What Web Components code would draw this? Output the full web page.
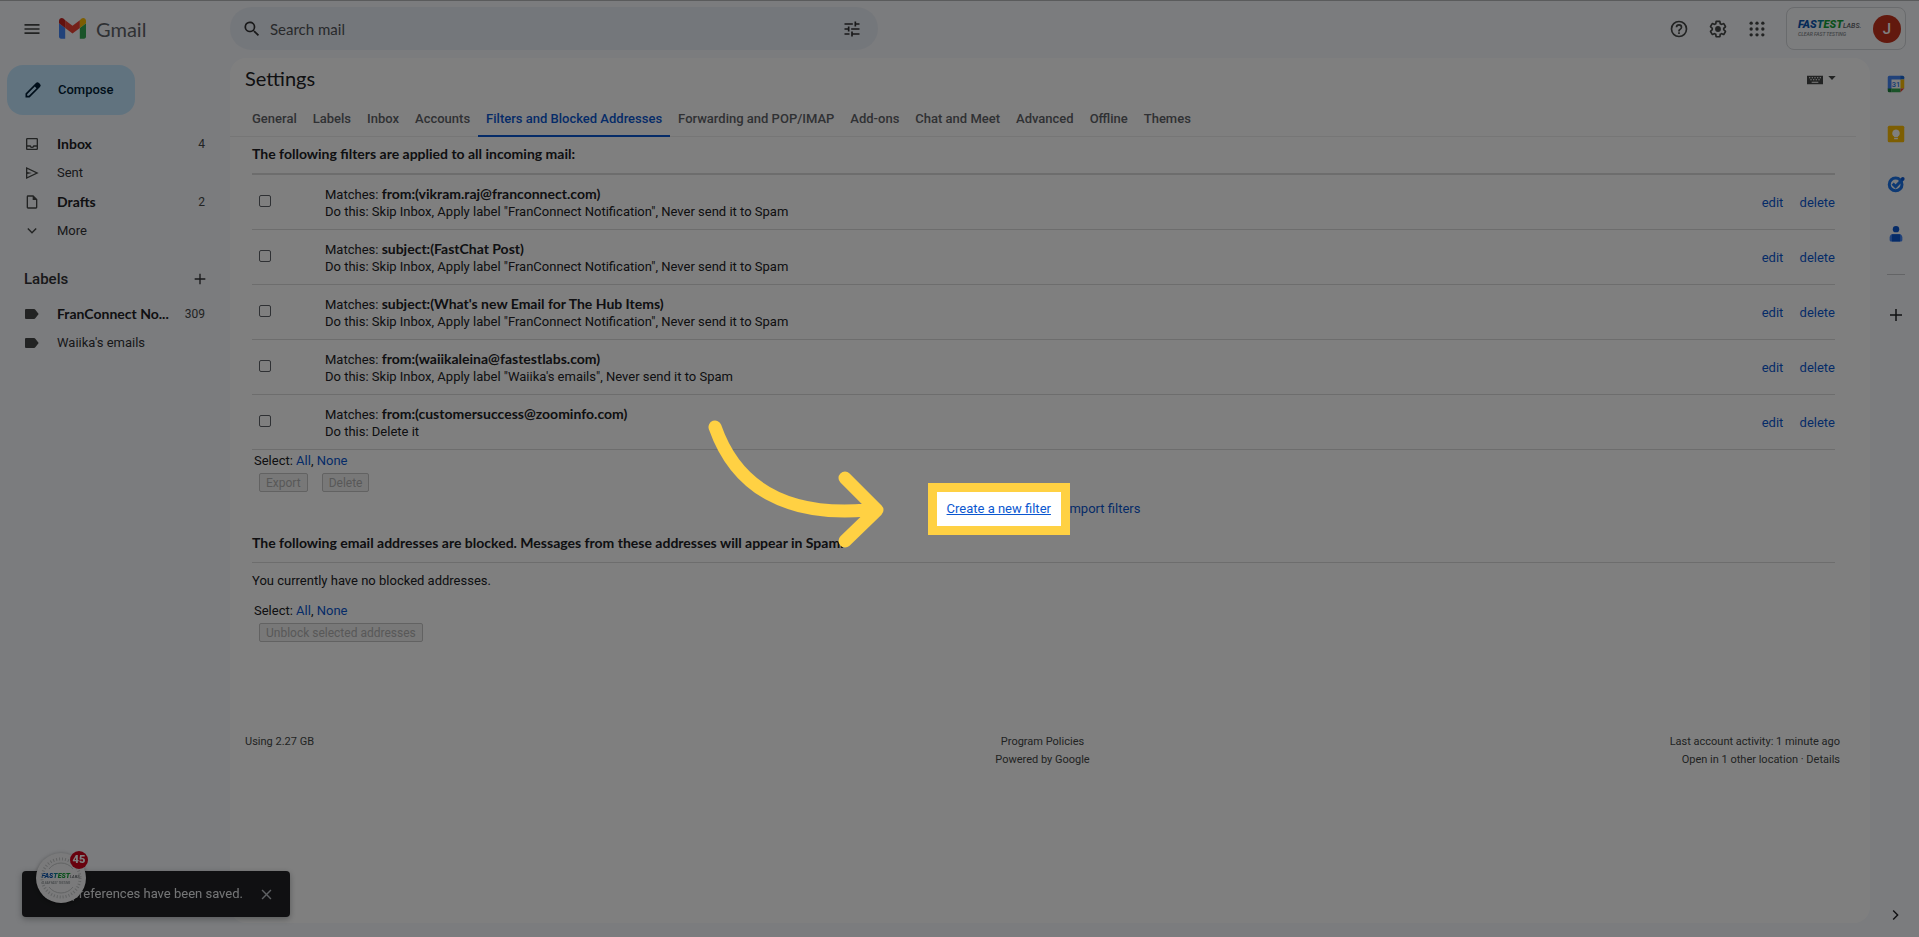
<!DOCTYPE html>
<html lang="en">
<head>
<meta charset="utf-8">
<meta name="viewport" content="width=device-width, initial-scale=1">
<title>Gmail - Settings</title>
<style>
  html, body { margin: 0; }
  body {
    background: #f6f8fc;
    color: #202124;
    font: 13px/18px Roboto, "Liberation Sans", sans-serif;
    --head-font: Lato, Roboto, sans-serif;
    --link: #0b57d0;
    --rule: #dadada;
  }
</style>
</head>
<body>
<gm-app></gm-app>

<script>
const define = (name, html, setup) => {
  const template = document.createElement('template');
  template.innerHTML = html;
  customElements.define(name, class extends HTMLElement {
    connectedCallback() {
      if (this.shadowRoot) return;
      const root = this.attachShadow({ mode: 'open' });
      root.append(template.content.cloneNode(true));
      if (setup) setup(this, root);
    }
  });
};

/* ---------- icons ---------- */
const ICONS = {
  menu: '<path d="M3 6h18v2H3zM3 11h18v2H3zM3 16h18v2H3z"/>',
  search: '<path d="M15.5 14h-.8l-.3-.3a6.5 6.5 0 1 0-.7.7l.3.3v.8l5 5 1.5-1.5zm-6 0a4.5 4.5 0 1 1 0-9 4.5 4.5 0 0 1 0 9z"/>',
  tune: '<path d="M3 17v2h6v-2zM3 5v2h10V5zm10 16v-2h8v-2h-8v-2h-2v6zM7 9v2H3v2h4v2h2V9zm14 4v-2H11v2zm-6-4h2V7h4V5h-4V3h-2z"/>',
  help: '<path d="M11 18h2v-2h-2zm1-16a10 10 0 1 0 0 20 10 10 0 0 0 0-20zm0 18a8 8 0 1 1 0-16 8 8 0 0 1 0 16zm0-14a4 4 0 0 0-4 4h2a2 2 0 1 1 4 0c0 2-3 1.75-3 5h2c0-2.25 3-2.5 3-5a4 4 0 0 0-4-4z"/>',
  gear: '<path d="M13.85 22.25h-3.7c-.74 0-1.36-.54-1.45-1.27l-.27-1.89c-.27-.14-.53-.29-.79-.46l-1.8.72c-.7.26-1.47-.03-1.81-.65L2.2 15.53c-.35-.66-.2-1.44.36-1.88l1.53-1.19c-.01-.15-.02-.3-.02-.46 0-.15.01-.31.02-.46l-1.52-1.19c-.59-.45-.74-1.26-.37-1.88l1.85-3.19c.34-.62 1.11-.9 1.79-.63l1.81.73c.26-.17.52-.32.78-.46l.27-1.91c.09-.7.71-1.25 1.44-1.25h3.7c.74 0 1.36.54 1.45 1.27l.27 1.89c.27.14.53.29.79.46l1.8-.72c.71-.26 1.48.03 1.82.65l1.84 3.18c.36.66.2 1.44-.36 1.88l-1.52 1.19c.01.15.02.3.02.46s-.01.31-.02.46l1.52 1.19c.56.45.72 1.23.37 1.86l-1.86 3.22c-.34.62-1.11.9-1.8.63l-1.8-.72c-.26.17-.52.32-.78.46l-.27 1.91c-.1.68-.72 1.22-1.46 1.22zm-3.23-2h2.76l.37-2.55.53-.22c.44-.18.88-.44 1.34-.78l.45-.34 2.38.96 1.38-2.4-2.03-1.58.07-.56c.03-.26.06-.51.06-.78s-.03-.53-.06-.78l-.07-.56 2.03-1.58-1.39-2.4-2.39.96-.45-.35c-.42-.32-.87-.58-1.33-.77l-.52-.22-.37-2.55h-2.76l-.37 2.55-.53.21c-.44.19-.88.44-1.34.79l-.45.33-2.38-.95-1.39 2.39 2.03 1.58-.07.56a7 7 0 0 0-.06.79c0 .26.02.53.06.78l.07.56-2.03 1.58 1.38 2.4 2.39-.96.45.35c.43.33.86.58 1.33.77l.53.22z"/><circle cx="12" cy="12" r="3.5"/>',
  apps: '<circle cx="5" cy="5" r="2"/><circle cx="12" cy="5" r="2"/><circle cx="19" cy="5" r="2"/><circle cx="5" cy="12" r="2"/><circle cx="12" cy="12" r="2"/><circle cx="19" cy="12" r="2"/><circle cx="5" cy="19" r="2"/><circle cx="12" cy="19" r="2"/><circle cx="19" cy="19" r="2"/>',
  pencil: '<path fill-rule="evenodd" d="M20.4 4.8l-1.2-1.2a2.6 2.6 0 0 0-3.7 0L3 16.1V21h4.9L20.4 8.5a2.6 2.6 0 0 0 0-3.7zM7 19H5v-2L14.2 7.8l2 2z"/>',
  inbox: '<path d="M19 3H5a2 2 0 0 0-2 2v14c0 1.1.9 2 2 2h14a2 2 0 0 0 2-2V5a2 2 0 0 0-2-2zm0 16H5v-3h3.6a4 4 0 0 0 6.8 0H19zm0-5h-5a2 2 0 0 1-4 0H5V5h14z"/>',
  sent: '<path d="M3 3v18l19-9zm2 3l12.6 6L5 18v-4.5l7-1.5-7-1.5z"/>',
  draft: '<path d="M14 2H6a2 2 0 0 0-2 2v16c0 1.1.9 2 2 2h12a2 2 0 0 0 2-2V8zM6 20V4h7v5h5v11z"/>',
  down: '<path d="M12 16l-7-7 1.5-1.5L12 13l5.5-5.5L19 9z"/>',
  next: '<path d="M8.5 4.5L7 6l6 6-6 6 1.5 1.5L16 12z"/>',
  plus: '<path d="M20 13h-7v7h-2v-7H4v-2h7V4h2v7h7z"/>',
  label: '<path d="M3 4.500h12c1 0 1.500.300 2 1l5 6.500-5 6.500c-.5.700-1 1-2 1H3A1.500 1.500 0 0 1 1.500 18V6A1.500 1.500 0 0 1 3 4.500z"/>',
  close: '<path d="M19 6.4L17.6 5 12 10.6 6.4 5 5 6.4l5.6 5.6L5 17.6 6.4 19l5.6-5.6 5.6 5.6 1.4-1.4-5.6-5.6z"/>',
  keyboard: '<path fill-rule="evenodd" d="M0 5.5h24v13H0zM3 8v1.500h2V8zm4 0v1.500h2V8zm4 0v1.500h2V8zm4 0v1.500h2V8zm4 0v1.500h2V8zM5 11v1.500h2V11zm4 0v1.500h2V11zm4 0v1.500h2V11zm4 0v1.500h2V11zM7 14.500v1.500h10v-1.500z"/>',
  caret: '<path d="M1 6h22L12 18z"/>',
  mail: '<path fill="#4285f4" d="M1.6 21H5.5V11.5L0 7.4v12A1.6 1.6 0 0 0 1.6 21z"/><path fill="#34a853" d="M18.5 21h3.9a1.6 1.6 0 0 0 1.6-1.6v-12l-5.5 4.1z"/><path fill="#fbbc04" d="M18.5 4.6v6.9L24 7.4V5.2c0-2-2.3-3.2-3.9-2z"/><path fill="#ea4335" d="M5.5 11.5V4.6l6.5 4.9 6.5-4.9v6.9L12 16.4z"/><path fill="#c5221f" d="M0 5.2v2.2l5.5 4.1V4.6L3.9 3.2C2.3 2 0 3.2 0 5.2z"/>',
  calendar: '<path fill="#fff" d="M5 5h14v14H5z"/><path fill="#4285f4" d="M3 1h16v5H6v13H1V3a2 2 0 0 1 2-2z"/><path fill="#1967d2" d="M18 1h3a2 2 0 0 1 2 2v3h-5z"/><path fill="#fbbc04" d="M18 6h5v12h-5z"/><path fill="#34a853" d="M6 18h12v5H6z"/><path fill="#188038" d="M1 18h5v5H3a2 2 0 0 1-2-2z"/><path fill="#ea4335" d="M18 18h5l-5 5z"/><text x="12" y="16" text-anchor="middle" font-family="Roboto" font-size="10" font-weight="500" fill="#1a73e8">31</text>',
  keep: '<rect x="1" y="1" width="22" height="22" rx="2" fill="#fbbc04"/><path fill="#fff" d="M12 6a5 5 0 0 0-2.5 9.3V16h5v-.7A5 5 0 0 0 12 6zM9.5 17h5v2h-5z"/>',
  tasks: '<circle cx="11.5" cy="12.5" r="8.5" fill="none" stroke="#1a73e8" stroke-width="4"/><path fill="none" stroke="#1a73e8" stroke-width="4" d="M7.5 11.5l4 4L21.5 5"/><circle cx="21" cy="5" r="2.5" fill="#0b57d0"/>',
  contacts: '<circle cx="12" cy="5.5" r="4.3" fill="#0b57d0"/><path fill="#4285f4" d="M3.5 16.5A5 5 0 0 1 8 12h8a5 5 0 0 1 4.5 4.5V20a2 2 0 0 1-2 2h-13a2 2 0 0 1-2-2z"/><path fill="#0b57d0" d="M6.5 12.5h11V22h-11z"/>'
};
define('gm-icon', `
  <style>
    :host { display: inline-block; width: var(--size, 18px); height: var(--size, 18px); flex: none; }
    svg { display: block; width: 100%; height: 100%; fill: currentColor; }
  </style>
  <svg viewBox="0 0 24 24" aria-hidden="true"></svg>`,
  (el, root) => { root.querySelector('svg').innerHTML = ICONS[el.getAttribute('name')] || ''; });

/* ---------- company wordmark ---------- */
define('gm-wordmark', `
  <style>
    :host { display: block; font: italic 900 11px/10px Roboto, sans-serif; white-space: nowrap; text-align: left; }
    .row { display: flex; align-items: baseline; }
    .a { color: #0a55b0; } .b { color: #0b7f96; } .c { color: #16a038; }
    small { font: italic 500 7px/10px Roboto, sans-serif; color: #5f6368; }
    .tag { font: italic 500 5px/6px Roboto, sans-serif; color: #80868b; }
    :host([compact]) { font-size: 7px; line-height: 8px; }
    :host([compact]) small { font-size: 4px; line-height: 8px; }
    :host([compact]) .tag { font-size: 3px; line-height: 4px; }
  </style>
  <div class="row"><span class="a">FAS</span><span class="b">T</span><span class="c">EST</span><small>LABS.</small></div>
  <div class="tag">CLEAR FAST TESTING</div>`);

/* ---------- top bar ---------- */
define('gm-topbar', `
  <style>
    :host { display: flex; align-items: center; height: 55px; padding-bottom: 2px; border-top: 1px solid #b4b6b8; color: #444746; }
    button { border: 0; padding: 0; background: none; color: inherit; display: flex; }
    .brand { width: 230px; flex: none; display: flex; align-items: center; box-sizing: border-box; padding-left: 22px; }
    .brand gm-icon { --size: 20px; }
    .brand .logo { --size: 27px; margin-left: 17px; }
    .brand a { display: flex; align-items: center; color: #5f6368; text-decoration: none; font: 20px/28px var(--head-font); }
    .brand span { margin-left: 10px; }
    form { display: flex; align-items: center; width: 648px; height: 43px; box-sizing: border-box; padding: 0 16px 0 12px; border-radius: 22px; background: #e9eef6; color: #303133; }
    form gm-icon { --size: 20px; }
    input { flex: 1; min-width: 0; border: 0; outline: 0; background: none; padding: 0; margin-left: 8px; font: 15px/20px var(--head-font); color: #444746; }
    input::placeholder { color: #505356; opacity: 1; }
    nav { margin-left: auto; display: flex; align-items: center; gap: 19px; padding-right: 13px; }
    nav gm-icon { --size: 20px; }
    .account { display: flex; align-items: center; justify-content: space-between; width: 120px; height: 43px; box-sizing: border-box; border: 1px solid #d3d6da; border-radius: 8px; padding: 0 4px 0 11px; background: #f9fafc; }
    .avatar { width: 28px; height: 28px; border-radius: 50%; background: #c5321c; color: #fff; font: 500 15px/28px Roboto, sans-serif; text-align: center; }
  </style>
  <div class="brand">
    <button aria-label="Main menu"><gm-icon name="menu"></gm-icon></button>
    <a href="#inbox"><gm-icon class="logo" name="mail"></gm-icon><span>Gmail</span></a>
  </div>
  <form>
    <button type="button" aria-label="Search"><gm-icon name="search"></gm-icon></button>
    <input type="text" aria-label="Search mail" placeholder="Search mail">
    <button type="button" aria-label="Search options"><gm-icon name="tune"></gm-icon></button>
  </form>
  <nav>
    <button aria-label="Support"><gm-icon name="help"></gm-icon></button>
    <button aria-label="Settings"><gm-icon name="gear"></gm-icon></button>
    <button aria-label="Google apps"><gm-icon name="apps"></gm-icon></button>
    <button class="account" aria-label="Account"><gm-wordmark></gm-wordmark><span class="avatar">J</span></button>
  </nav>`);

/* ---------- left navigation ---------- */
define('gm-nav-item', `
  <style>
    :host { display: block; height: 29px; }
    a { display: flex; align-items: center; height: 100%; padding: 0 25px 0 24px; color: #303134; text-decoration: none; }
    gm-icon { --size: 16px; color: #444746; margin-right: 17px; }
    span { flex: 1; white-space: nowrap; }
    em { font: 12px/18px Roboto, sans-serif; color: #444746; }
    :host([unread]) span { font: 700 14px/18px var(--head-font); color: #202124; }
  </style>
  <a href="#"><span><slot></slot></span><em></em></a>`,
  (el, root) => {
    const icon = document.createElement('gm-icon');
    icon.setAttribute('name', el.getAttribute('icon'));
    root.querySelector('a').prepend(icon);
    root.querySelector('em').textContent = el.getAttribute('count') || '';
  });

define('gm-sidebar', `
  <style>
    :host { display: block; width: 230px; flex: none; }
    .compose { display: flex; align-items: center; width: 128px; height: 50px; margin: 7px 0 14px 7px; padding: 0 0 0 16px; border: 0; border-radius: 16px; background: #c2e7ff; color: #001d35; font: 500 13px/18px Roboto, sans-serif; }
    .compose gm-icon { --size: 20px; margin-right: 15px; }
    h2 { display: flex; align-items: center; justify-content: space-between; margin: 24px 22px 10px 24px; height: 20px; font: 500 15px/20px Roboto, sans-serif; color: #303134; }
    h2 button { display: flex; padding: 0; border: 0; background: none; color: #303134; --size: 16px; }
  </style>
  <button class="compose"><gm-icon name="pencil"></gm-icon>Compose</button>
  <nav>
    <gm-nav-item icon="inbox" unread count="4">Inbox</gm-nav-item>
    <gm-nav-item icon="sent">Sent</gm-nav-item>
    <gm-nav-item icon="draft" unread count="2">Drafts</gm-nav-item>
    <gm-nav-item icon="down">More</gm-nav-item>
  </nav>
  <h2>Labels<button aria-label="Create new label"><gm-icon name="plus"></gm-icon></button></h2>
  <nav>
    <gm-nav-item icon="label" unread count="309">FranConnect No...</gm-nav-item>
    <gm-nav-item icon="label">Waiika's emails</gm-nav-item>
  </nav>`);

/* ---------- settings tabs ---------- */
define('gm-tabs', `
  <style>
    :host { display: flex; padding-left: 14px; margin-right: 14px; border-bottom: 1px solid #ececec; }
    a { padding: 9px 8px 7px; border-bottom: 2px solid transparent; margin-bottom: -1px; color: #5f6368; font-weight: 500; text-decoration: none; white-space: nowrap; }
    a[aria-current] { color: #0b57d0; border-color: #0b57d0; }
  </style>`,
  (el, root) => {
    el.getAttribute('items').split('|').forEach(name => {
      const a = document.createElement('a');
      a.href = '#settings';
      a.textContent = name;
      if (name === el.getAttribute('current')) a.setAttribute('aria-current', 'page');
      root.append(a);
    });
  });

/* ---------- filter list ---------- */
const SKIP = label => `Skip Inbox, Apply label "${label}", Never send it to Spam`;
const FILTERS = [
  ['from:(vikram.raj@franconnect.com)', SKIP('FranConnect Notification')],
  ['subject:(FastChat Post)', SKIP('FranConnect Notification')],
  ["subject:(What's new Email for The Hub Items)", SKIP('FranConnect Notification')],
  ['from:(waiikaleina@fastestlabs.com)', SKIP("Waiika's emails")],
  ['from:(customersuccess@zoominfo.com)', 'Delete it']
];
define('gm-filter-list', `
  <style>
    :host { display: block; border-top: 2px solid var(--rule); }
    table { width: 100%; border-collapse: collapse; }
    td { height: 53px; padding: 1px 0 0; border-bottom: 1px solid var(--rule); }
    .pick { width: 73px; }
    input { display: block; appearance: none; width: 12px; height: 12px; margin: 0 0 4px 7px; border: 1px solid #5f6368; border-radius: 2px; }
    b { font: 700 14px/18px var(--head-font); }
    .line { display: block; height: 18px; }
    .act { text-align: right; white-space: nowrap; }
    .act a { color: var(--link); text-decoration: none; margin-left: 13px; }
  </style>
  <table><tbody></tbody></table>`,
  (el, root) => {
    root.querySelector('tbody').innerHTML = FILTERS.map(([match, action], i) => `
      <tr>
        <td class="pick"><input type="checkbox" id="f${i}"></td>
        <td><label for="f${i}"><span class="line">Matches: <b>${match}</b></span><span class="line">Do this: ${action}</span></label></td>
        <td class="act"><a href="#edit">edit</a> <a href="#delete">delete</a></td>
      </tr>`).join('');
  });

/* ---------- select all / none with its buttons ---------- */
define('gm-bulk', `
  <style>
    :host { display: block; padding-left: 2px; }
    a { color: var(--link); text-decoration: none; }
    .buttons { display: flex; gap: 14px; padding: 3px 0 0 5px; }
    ::slotted(button) { height: 19px; padding: 0 6px; border: 1px solid #c4c4c4; border-radius: 2px; background: #f0f0f0; color: #b0b0b0; font: 12px/16px Roboto, sans-serif; }
  </style>
  <div>Select: <a href="#all">All</a>, <a href="#none">None</a></div>
  <div class="buttons"><slot></slot></div>`);

define('gm-spotlight', `
  <style>
    :host { display: inline-block; position: relative; }
    .frame { position: absolute; z-index: 50; inset: -17px -19px; border: 9px solid #ffd143; box-shadow: 0 0 0 4000px rgba(0, 0, 0, .5); pointer-events: none; }
    svg { position: absolute; z-index: 51; right: calc(100% + 62px); top: -82px; width: 180px; height: 134px; fill: none; stroke: #ffd143; stroke-width: 13; stroke-linecap: round; stroke-linejoin: round; pointer-events: none; }
  </style>
  <slot></slot>
  <div class="frame"></div>
  <svg viewBox="0 0 180 134" aria-hidden="true"><path d="M10 9C31 69 81 99 162 92M140 60L172 92L140 123"/></svg>`);

/* ---------- settings panel ---------- */
define('gm-settings', `
  <style>
    :host { display: flex; flex-direction: column; flex: 1; min-width: 0; margin-bottom: 14px; border-radius: 16px; background: #fff; }
    header { display: flex; align-items: center; justify-content: space-between; padding: 6px 34px 9px 15px; }
    h1 { margin: 0; font: 20px/28px var(--head-font); }
    header button { display: flex; align-items: center; gap: 5px; padding: 4px 0 0; border: 0; background: none; color: #444746; --size: 16px; }
    header button gm-icon + gm-icon { --size: 8px; margin-bottom: 4px; }
    section { padding: 0 35px 0 22px; }
    h2 { margin: 0; padding: 8px 0 10px; font: 700 14px/18px var(--head-font); }
    gm-bulk { margin-top: 2px; }
    .create { display: flex; justify-content: center; gap: 15px; margin: 8px 0 8px; white-space: nowrap; }
    .create a { color: var(--link); text-decoration: none; }
    .create gm-spotlight a { text-decoration: underline; }
    p { margin: 0; padding: 9px 0 10px; border-top: 1px solid var(--rule); }
    footer { display: grid; grid-template-columns: 1fr 1fr 1fr; padding: 91px 30px 0 15px; font-size: 11px; color: #444746; }
    footer div:nth-child(2) { text-align: center; }
    footer div:nth-child(3) { text-align: right; }
    footer a { color: inherit; text-decoration: none; }
  </style>
  <header>
    <h1>Settings</h1>
    <button aria-label="Select input tool"><gm-icon name="keyboard"></gm-icon><gm-icon name="caret"></gm-icon></button>
  </header>
  <gm-tabs items="General|Labels|Inbox|Accounts|Filters and Blocked Addresses|Forwarding and POP/IMAP|Add-ons|Chat and Meet|Advanced|Offline|Themes" current="Filters and Blocked Addresses"></gm-tabs>
  <section>
    <h2>The following filters are applied to all incoming mail:</h2>
    <gm-filter-list></gm-filter-list>
    <gm-bulk><button disabled>Export</button><button disabled>Delete</button></gm-bulk>
    <div class="create">
      <gm-spotlight><a href="#create">Create a new filter</a></gm-spotlight>
      <a href="#import">Import filters</a>
    </div>
    <h2>The following email addresses are blocked. Messages from these addresses will appear in Spam.</h2>
    <p>You currently have no blocked addresses.</p>
    <gm-bulk><button disabled>Unblock selected addresses</button></gm-bulk>
  </section>
  <footer>
    <div>Using 2.27 GB</div>
    <div><a href="#policies">Program Policies</a><br>Powered by <a href="#google">Google</a></div>
    <div>Last account activity: 1 minute ago<br>Open in 1 other location · <a href="#details">Details</a></div>
  </footer>`);

/* ---------- right side rail ---------- */
define('gm-rail', `
  <style>
    :host { display: flex; flex-direction: column; align-items: center; width: 49px; flex: none; box-sizing: border-box; padding: 17px 0 14px 2px; color: #202124; }
    button { display: flex; padding: 0; border: 0; background: none; color: inherit; margin-bottom: 32px; --size: 18px; }
    hr { width: 18px; margin: -1px 0 31px; border: 0; border-top: 1px solid #c7c9cc; }
    button:last-child { margin: auto 0 0; --size: 16px; }
  </style>
  <button aria-label="Calendar"><gm-icon name="calendar"></gm-icon></button>
  <button aria-label="Keep"><gm-icon name="keep"></gm-icon></button>
  <button aria-label="Tasks"><gm-icon name="tasks"></gm-icon></button>
  <button aria-label="Contacts"><gm-icon name="contacts"></gm-icon></button>
  <hr>
  <button aria-label="Get add-ons"><gm-icon name="plus"></gm-icon></button>
  <button aria-label="Hide side panel"><gm-icon name="next"></gm-icon></button>`);

/* ---------- toast with the chat bubble that floats on it ---------- */
define('gm-toast', `
  <style>
    :host { position: fixed; z-index: 5; left: 22px; bottom: 20px; display: flex; align-items: center; justify-content: flex-end; gap: 15px; width: 268px; height: 46px; box-sizing: border-box; padding-right: 15px; border-radius: 4px; background: #202124; color: #e8eaed; box-shadow: 0 2px 6px rgba(60, 64, 67, .4); white-space: nowrap; }
    button { display: flex; padding: 0; border: 0; background: none; color: #bdc1c6; --size: 17px; }
    .bubble { position: absolute; left: 14px; top: -18px; width: 50px; height: 50px; border-radius: 50%; box-sizing: border-box; background: #f4f5f6; display: flex; align-items: center; justify-content: center; box-shadow: 0 1px 4px rgba(0, 0, 0, .4); }
    .bubble svg { position: absolute; inset: 0; fill: none; stroke: #c4c6c8; }
    .badge { position: absolute; right: -2px; top: -2px; width: 18px; height: 18px; border-radius: 50%; background: #d0021b; color: #fff; font: 900 11px/18px Roboto, sans-serif; text-align: center; }
  </style>
  <span><slot></slot></span>
  <button aria-label="Close"><gm-icon name="close"></gm-icon></button>
  <div class="bubble">
    <svg viewBox="0 0 50 50" aria-hidden="true"><circle cx="25" cy="25" r="19" stroke-width="3" stroke-dasharray="1 2"/><path d="M13 16a15 15 0 0 1 24 0M13 34a15 15 0 0 0 24 0"/></svg>
    <gm-wordmark compact></gm-wordmark>
    <span class="badge">45</span>
  </div>`);

define('gm-app', `
  <style>
    :host { display: flex; flex-direction: column; min-height: 100vh; }
    main { display: flex; flex: 1; }
  </style>
  <gm-topbar></gm-topbar>
  <main>
    <gm-sidebar></gm-sidebar>
    <gm-settings></gm-settings>
    <gm-rail></gm-rail>
  </main>
  <gm-toast>Your preferences have been saved.</gm-toast>`);
</script>
</body>
</html>
